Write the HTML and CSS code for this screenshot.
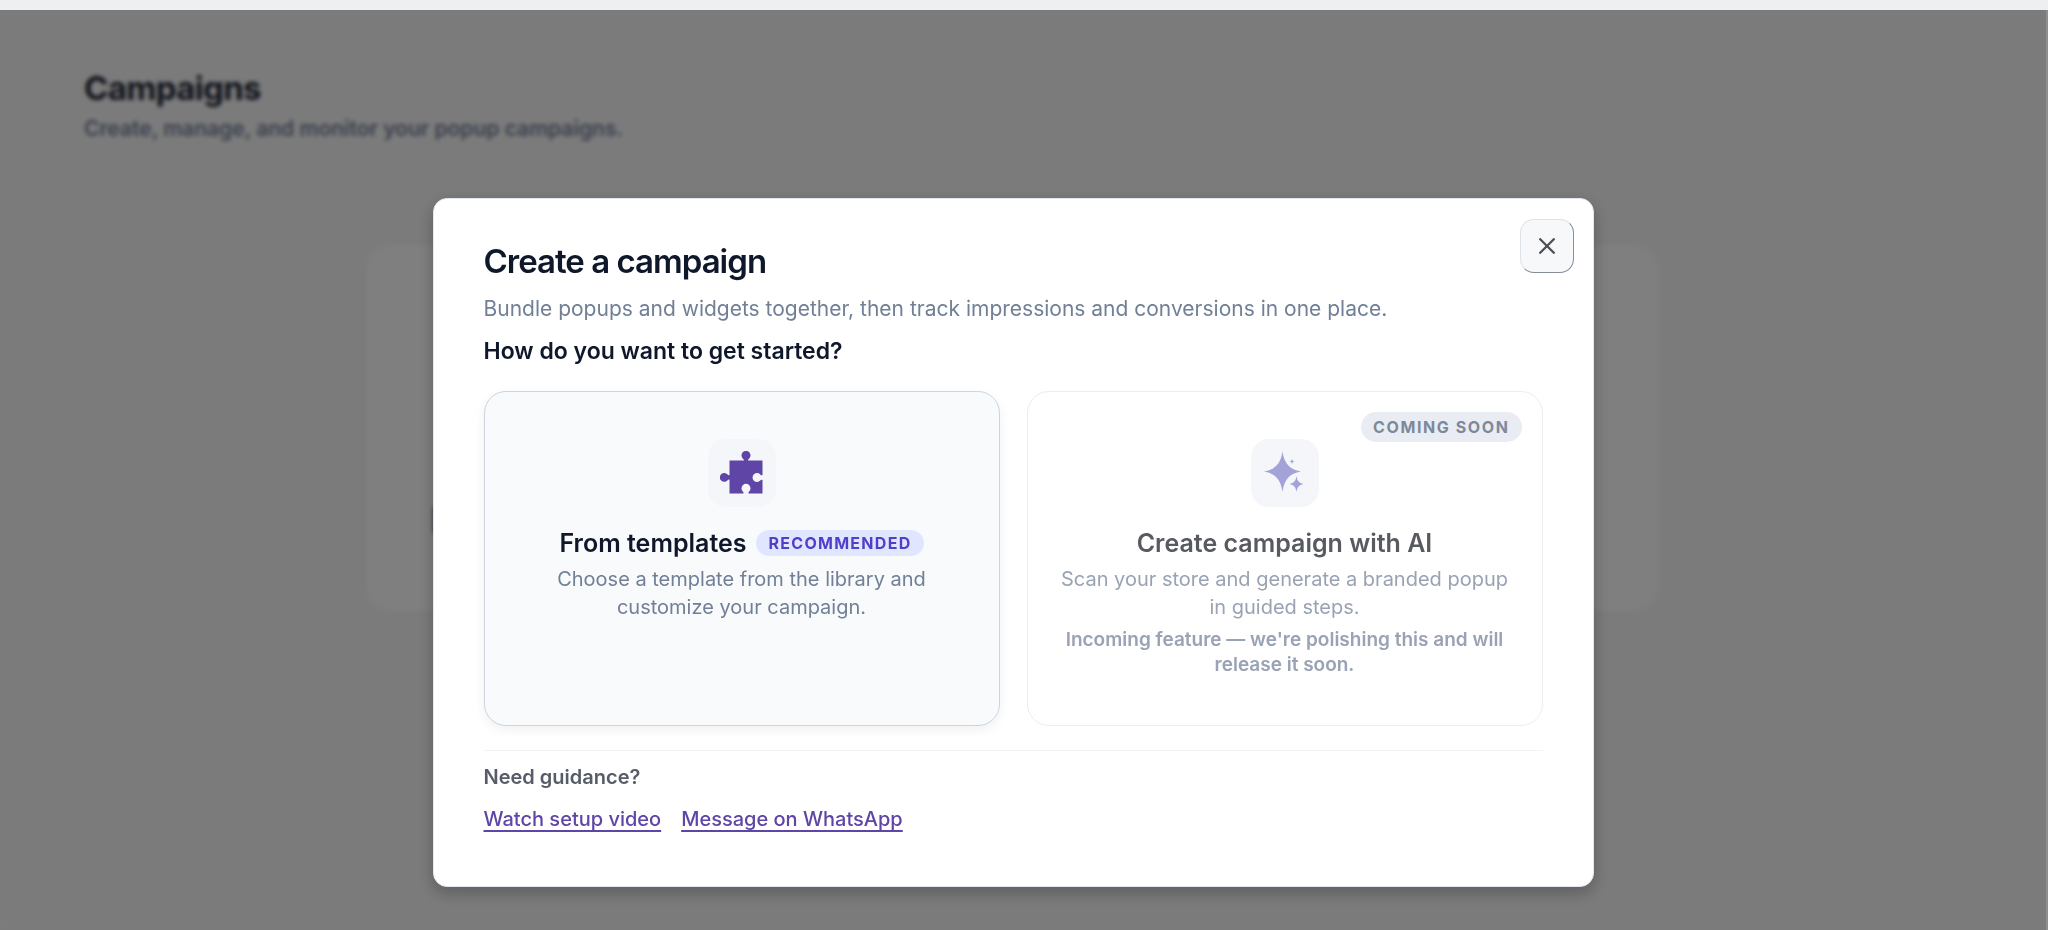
FILE: index.html
```html
<!DOCTYPE html>
<html lang="en">
<head>
    <meta charset="UTF-8">
    <meta name="viewport" content="width=device-width, initial-scale=1.0">
    <title>Campaigns</title>
    <link rel="stylesheet" href="styles.css">
</head>
<body>
    <div class="page">
        <header class="page-header">
            <h1>Campaigns</h1>
            <p>Create, manage, and monitor your popup campaigns.</p>
        </header>
        <div class="empty-card">
            <div class="empty-bar"></div>
        </div>
    </div>

    <div class="overlay">
        <div class="modal" role="dialog" aria-modal="true" aria-labelledby="modal-title">
            <button class="close-btn" type="button" aria-label="Close">
                <svg width="16" height="16" viewBox="0 0 16 16" fill="none" stroke="currentColor" stroke-width="2.3" stroke-linecap="round">
                    <path d="M1.2 1.2l13.6 13.6M14.8 1.2L1.2 14.8"/>
                </svg>
            </button>

            <h2 class="modal-title" id="modal-title">Create a campaign</h2>
            <p class="modal-subtitle">Bundle popups and widgets together, then track impressions and conversions in one place.</p>
            <h3 class="modal-question">How do you want to get started?</h3>

            <div class="options">
                <button class="option selected" type="button">
                    <span class="option-icon">
                        <svg class="puzzle" width="44" height="44" viewBox="1 0 44 44" fill="currentColor">
                            <path d="M10.5 9.5H24.8C25.2 8.8 24.8 8.4 24.2 7.9A4.5 4.5 0 1 1 29.8 7.9C29.2 8.4 28.8 8.8 29.2 9.5H43.5V24C42.6 24.7 42 24.2 41.3 23.4A4.5 4.5 0 1 0 41.3 29.6C42 28.8 42.6 28.3 43.5 29V42.5H29.7C29 41.7 29.4 41.2 30 40.7A4.5 4.5 0 1 0 24 40.7C24.6 41.2 25 41.7 24.3 42.5H10.5V28.7C9.7 28.2 9.2 28.6 8.6 29.2A4.4 4.4 0 1 1 8.6 23.6C9.2 24.2 9.7 24.6 10.5 24.1Z"/>
                        </svg>
                    </span>
                    <span class="option-title">From templates <span class="badge recommended">RECOMMENDED</span></span>
                    <span class="option-text narrow">Choose a template from the library and customize your campaign.</span>
                </button>

                <button class="option coming-soon" type="button" disabled>
                    <span class="badge soon">COMING SOON</span>
                    <span class="option-icon">
                        <svg class="sparkles" width="44" height="44" viewBox="0 0 44 44" fill="currentColor">
                            <path d="M19.5 .5C21.3 12.5 26.5 18.5 38 20.5C26.5 22.5 21.3 28.5 19.5 41C17.7 28.5 12.5 22.5 1 20.5C12.5 18.5 17.7 12.5 19.5 .5Z"/>
                            <path d="M33.5 25C34.3 30 36 32 40.5 33C36 34 34.3 36 33.5 41C32.7 36 31 34 26.5 33C31 32 32.7 30 33.5 25Z"/>
                            <path d="M29 8C29.4 9.7 29.9 10.2 31.7 10.5C29.9 10.8 29.4 11.3 29 13C28.6 11.3 28.1 10.8 26.3 10.5C28.1 10.2 28.6 9.7 29 8Z"/>
                        </svg>
                    </span>
                    <span class="option-title">Create campaign with AI</span>
                    <span class="option-text">Scan your store and generate a branded popup in guided steps.</span>
                    <span class="option-note">Incoming feature — we're polishing this and will release it soon.</span>
                </button>
            </div>

            <div class="guidance">
                <p class="guidance-title">Need guidance?</p>
                <div class="guidance-links">
                    <a href="#">Watch setup video</a>
                    <a href="#">Message on WhatsApp</a>
                </div>
            </div>
        </div>
    </div>
</body>
</html>
```
FILE: styles.css
```css
* {
    box-sizing: border-box;
}
body {
    margin: 0;
    min-height: 100vh;
    font-family: Inter, "Liberation Sans", sans-serif;
    background: #f7f7f7;
    color: #0f172a;
    border-top: 10px solid #eeeff1;
}
h1, h2, h3, p {
    margin: 0;
}

/* page behind the modal */
.page {
    padding: 56px 24px 0 0;
}
.page-header {
    padding-left: 84px;
}
.page-header h1 {
    font-size: 33px;
    line-height: 44px;
    font-weight: 700;
    letter-spacing: -0.02em;
    color: #1e2433;
}
.page-header p {
    font-size: 21px;
    line-height: 38px;
    font-weight: 600;
    color: #74809a;
}
.empty-card {
    max-width: 1291px;
    height: 364px;
    margin: 98px auto 0;
    padding: 260px 110px 0 66px;
    background: #fff;
    border-radius: 22px;
}
.empty-bar {
    height: 28px;
    background: #64748b;
    border-radius: 4px;
}

/* modal */
.overlay {
    position: fixed;
    top: 10px;
    left: 0;
    right: 0;
    bottom: 0;
    padding: 188px 20px 0 0;
    background: rgba(0, 0, 0, 0.5);
    backdrop-filter: blur(2px);
    border-right: 2px solid #8f8f8f;
}
.modal {
    position: relative;
    max-width: 1161px;
    margin: 0 auto;
    padding: 42px 50px 53px;
    background: #fff;
    border: 1px solid #e2e8f0;
    border-radius: 14px;
    box-shadow: 0 6px 16px rgba(0, 0, 0, 0.25);
}
.close-btn {
    position: absolute;
    top: 20px;
    right: 19px;
    width: 54px;
    height: 54px;
    display: flex;
    align-items: center;
    justify-content: center;
    padding: 0;
    color: #4b4f56;
    background: #f6f8fa;
    border: 1px solid;
    border-color: #dde3ea #858c9a #858c9a #dde3ea;
    border-radius: 14px;
    cursor: pointer;
}
.modal-title {
    font-size: 33px;
    line-height: 40px;
    font-weight: 600;
    letter-spacing: -0.03em;
}
.modal-subtitle {
    margin-top: 12px;
    font-size: 21px;
    line-height: 32px;
    color: #718096;
}
.modal-question {
    margin-top: 10px;
    font-size: 23px;
    line-height: 32px;
    font-weight: 600;
}

/* option cards */
.options {
    display: grid;
    grid-template-columns: 1fr 1fr;
    gap: 27px;
    margin-top: 24px;
}
.option {
    position: relative;
    display: flex;
    flex-direction: column;
    align-items: center;
    justify-content: flex-start;
    padding: 47px 30px 48px;
    font-family: inherit;
    text-align: center;
    color: #0f172a;
    background: #fff;
    border: 1px solid #ebedf2;
    border-radius: 22px;
}
.option.selected {
    background: #f9fafc;
    border-color: #cbd5e1;
    box-shadow: 0 4px 12px rgba(15, 23, 42, 0.06);
    cursor: pointer;
}
.option-icon {
    display: flex;
    align-items: center;
    justify-content: center;
    width: 68px;
    height: 68px;
    background: #f4f6fa;
    border-radius: 18px;
}
.puzzle {
    color: #5f45a5;
}
.sparkles {
    color: #a3a3da;
}
.option-title {
    display: flex;
    align-items: center;
    gap: 10px;
    margin-top: 20px;
    font-size: 25px;
    line-height: 32px;
    font-weight: 600;
}
.option-text {
    margin-top: 6px;
    font-size: 20px;
    line-height: 28px;
    color: #718096;
}
.option-text.narrow {
    max-width: 400px;
}
.option-note {
    margin-top: 6px;
    font-size: 19px;
    line-height: 25px;
    font-weight: 600;
}
.coming-soon .option-title {
    color: #575a61;
}
.coming-soon .option-text,
.coming-soon .option-note {
    color: #99a3b3;
}
.badge {
    padding: 0 12px;
    font-size: 16px;
    line-height: 26px;
    font-weight: 700;
    letter-spacing: 0.08em;
    border-radius: 15px;
}
.recommended {
    color: #4f3fcb;
    background: #e0e6ff;
}
.soon {
    position: absolute;
    top: 20px;
    right: 20px;
    line-height: 30px;
    letter-spacing: 0.1em;
    color: #7d889a;
    background: #e9edf3;
}

/* help links */
.guidance {
    margin-top: 24px;
    padding-top: 12px;
    border-top: 1px solid #f1f3f5;
}
.guidance-title {
    font-size: 20px;
    line-height: 28px;
    font-weight: 600;
    color: #565d68;
}
.guidance-links {
    display: flex;
    gap: 20px;
    margin-top: 14px;
}
.guidance-links a {
    font-size: 20px;
    line-height: 28px;
    font-weight: 500;
    color: #5f45a5;
    text-underline-offset: 4px;
}
```
